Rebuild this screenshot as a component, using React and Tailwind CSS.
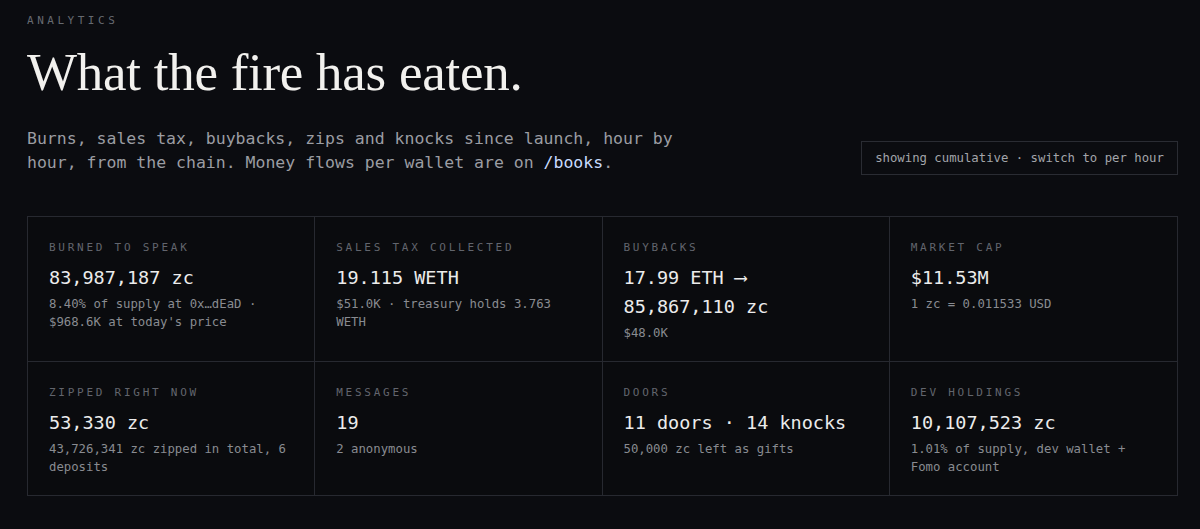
import React from 'react';

const mono = { fontFamily: '"DejaVu Sans Mono", "Liberation Mono", monospace' };

const stats = [
  { label: 'BURNED TO SPEAK', value: '83,987,187 zc', sub: "8.40% of supply at 0x…dEaD · $968.6K at today's price" },
  { label: 'SALES TAX COLLECTED', value: '19.115 WETH', sub: '$51.0K · treasury holds 3.763 WETH' },
  { label: 'BUYBACKS', value: '17.99 ETH ⟶ 85,867,110 zc', sub: '$48.0K' },
  { label: 'MARKET CAP', value: '$11.53M', sub: '1 zc = 0.011533 USD' },
  { label: 'ZIPPED RIGHT NOW', value: '53,330 zc', sub: '43,726,341 zc zipped in total, 6 deposits' },
  { label: 'MESSAGES', value: '19', sub: '2 anonymous' },
  { label: 'DOORS', value: '11 doors · 14 knocks', sub: '50,000 zc left as gifts' },
  { label: 'DEV HOLDINGS', value: '10,107,523 zc', sub: '1.01% of supply, dev wallet + Fomo account' },
];

function Stat({ label, value, sub, col, row }) {
  return (
    <div
      className={
        'px-[21px] pt-[23px] pb-[19px] border-[#272930] ' +
        (col < 3 ? 'border-r ' : '') +
        (row === 0 ? 'border-b' : '')
      }
    >
      <div className="text-[11px] leading-4 tracking-[0.25em] text-[#62656d] mb-[7px]">{label}</div>
      <div className="text-[18.5px] leading-[29px] text-[#ececec]">{value}</div>
      <div className="text-[12.3px] leading-[18px] text-[#898b91] mt-[3px]">{sub}</div>
    </div>
  );
}

export default function App() {
  return (
    <div className="min-h-screen w-full bg-[#0b0c10] px-[27px] pt-[14px]" style={mono}>
      <div className="text-[11px] leading-[14px] tracking-[0.32em] text-[#666a71]">ANALYTICS</div>

      <h1
        className="mt-[14px] text-[53px] leading-[60px] text-[#f2f1ee] tracking-[-0.005em]"
        style={{ fontFamily: '"Liberation Serif", "DejaVu Serif", serif' }}
      >
        What the fire has eaten.
      </h1>

      <div className="mt-[25px] flex items-end justify-between">
        <p className="w-[670px] text-[16.5px] leading-6 text-[#9b9da3]">
          Burns, sales tax, buybacks, zips and knocks since launch, hour by hour, from the chain. Money
          flows per wallet are on <span className="text-[#c9dcff]">/books</span>.
        </p>
        <div className="mr-[-5px] border border-[#2a2c33] h-[34px] w-[317px] flex items-center justify-center text-[12.3px] text-[#a3a5aa]">
          showing cumulative · switch to per hour
        </div>
      </div>

      <div className="mt-[41px] mr-[-5px] grid grid-cols-4 border border-[#272930] bg-[#0a0b0e]">
        {stats.map((s, i) => (
          <Stat key={s.label} {...s} col={i % 4} row={Math.floor(i / 4)} />
        ))}
      </div>
    </div>
  );
}
